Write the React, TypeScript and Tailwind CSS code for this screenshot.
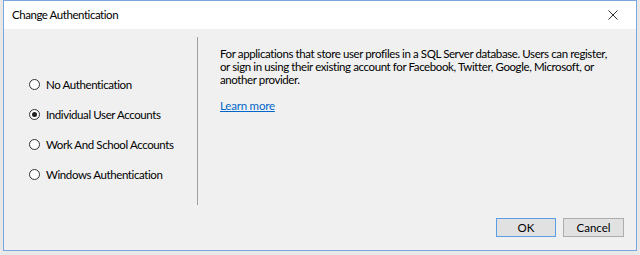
import React, { useState } from 'react';

// Authentication choices shown in the left column
const OPTIONS = [
  'No Authentication',
  'Individual User Accounts',
  'Work And School Accounts',
  'Windows Authentication',
];

const Radio: React.FC<{ checked: boolean }> = ({ checked }) => (
  <span className="flex h-[11px] w-[11px] shrink-0 items-center justify-center rounded-full border border-[#333333] bg-white">
    {checked && <span className="h-[5px] w-[5px] rounded-full bg-[#222222]" />}
  </span>
);

const App: React.FC = () => {
  const [selected, setSelected] = useState(1);

  return (
    <div className="h-[255px] w-[640px] overflow-hidden bg-[#e8e8e8] pl-[3px] font-['Lato','Noto_Sans',sans-serif] text-[11.5px] text-black">
      <div className="flex h-[251px] w-[634px] flex-col border border-[#7aa7dc] bg-[#f0f0f0]">
        {/* Title bar */}
        <div className="flex h-[28px] shrink-0 items-center justify-between bg-white pl-[8px] pr-[18px]">
          <span className="leading-none tracking-[-0.45px]">Change Authentication</span>
          <svg width="10" height="10" viewBox="0 0 10 10" className="text-[#333333]">
            <path d="M0.5 0.5 L9.5 9.5 M9.5 0.5 L0.5 9.5" stroke="currentColor" strokeWidth="1" />
          </svg>
        </div>

        {/* Body */}
        <div className="flex h-[176px] shrink-0 pt-[8px]">
          <div className="flex w-[194px] shrink-0 flex-col gap-[15px] border-r border-[#a0a0a0] pl-[25px] pt-[40px]">
            {OPTIONS.map((opt, i) => (
              <label
                key={opt}
                className="flex h-[15px] cursor-pointer items-center gap-[6px] whitespace-nowrap leading-none tracking-[-0.4px]"
                onClick={() => setSelected(i)}
              >
                <Radio checked={selected === i} />
                <span>{opt}</span>
              </label>
            ))}
          </div>
          <div className="min-w-0 flex-1 whitespace-nowrap pl-[22px] pt-[10px] leading-[13px] tracking-[-0.4px]">
            <p>
              For applications that store user profiles in a SQL Server database. Users can register,
              <br />
              or sign in using their existing account for Facebook, Twitter, Google, Microsoft, or
              <br />
              another provider.
            </p>
            <a href="#" className="mt-[13px] inline-block tracking-[-0.2px] text-[#0066cc] underline">
              Learn more
            </a>
          </div>
        </div>

        {/* Footer buttons */}
        <div className="flex flex-1 items-start justify-end gap-[7px] pr-[12px] pt-[13px]">
          <button className="h-[19px] w-[60px] border border-[#5a9ee8] bg-[#e1e1e1] leading-none">OK</button>
          <button className="h-[19px] w-[61px] border border-[#adadad] bg-[#e1e1e1] leading-none">Cancel</button>
        </div>
      </div>
    </div>
  );
};

export default App;
